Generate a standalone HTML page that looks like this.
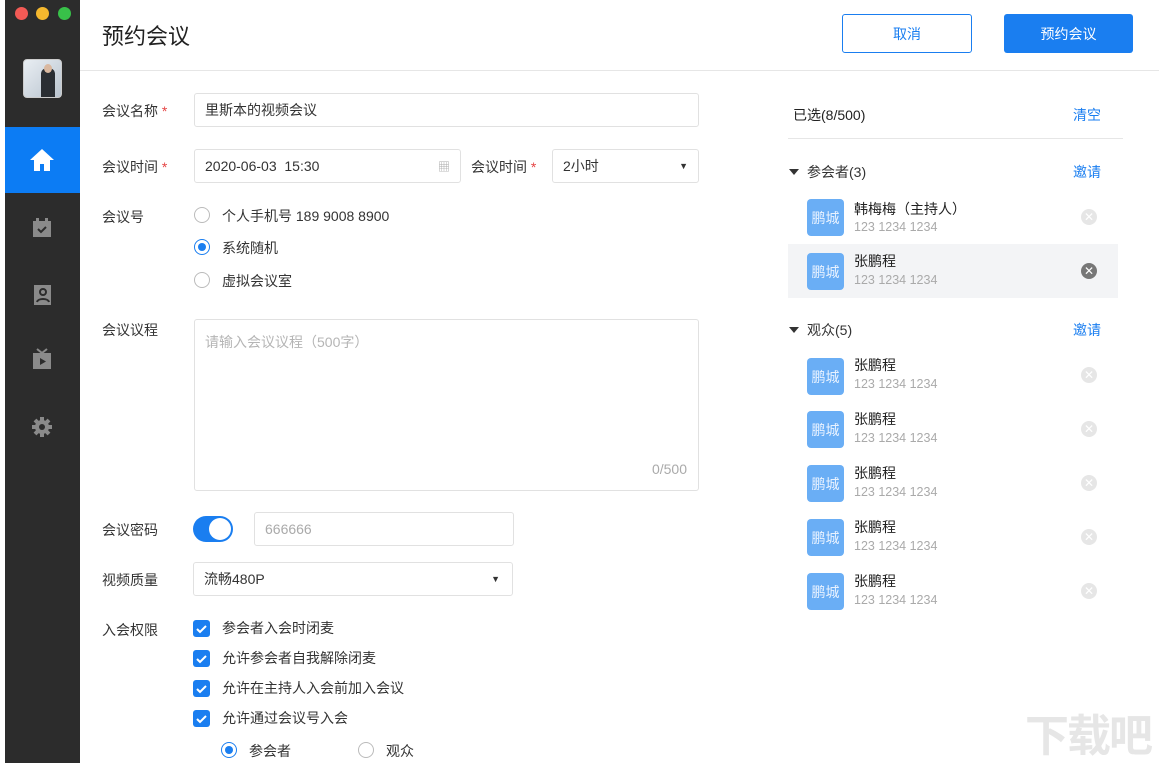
<!DOCTYPE html>
<html><head><meta charset="utf-8"><style>
*{margin:0;padding:0;box-sizing:border-box}
body{width:1159px;height:763px;overflow:hidden;background:#fff;font-family:"Liberation Sans","Noto Sans CJK SC",sans-serif;color:#333;font-size:14px;position:relative}
.a{position:absolute}
.side{left:5px;top:0;width:75px;height:763px;background:#2c2c2c}
.lbl{position:absolute;left:102px;font-size:14px;color:#333}
.req{color:#e54545}
.inp{position:absolute;border:1px solid #e1e1e1;border-radius:3px;background:#fff;font-size:14px;padding-left:10px;display:flex;align-items:center}
.radio{position:absolute;width:16px;height:16px;border:1px solid #bbb;border-radius:50%}
.radio.on{border:1px solid #1a7ef0}
.radio.on::after{content:"";position:absolute;left:3px;top:3px;width:8px;height:8px;border-radius:50%;background:#1a7ef0}
.cb{position:absolute;left:193px;width:17px;height:17px;border-radius:3px;background:#1a7ef0}
.cb svg{position:absolute;left:2px;top:2px}
.ct{position:absolute;left:222px;font-size:14px}
.av{position:absolute;left:807px;width:37px;height:37px;border-radius:4px;background:#6aaef5;color:#e8f2ff;font-size:14px;display:flex;align-items:center;justify-content:center}
.nm{position:absolute;left:854px;font-size:14px;color:#222}
.ph{position:absolute;left:854px;font-size:12.5px;color:#aaa}
.x{position:absolute;left:1081px;width:16px;height:16px;border-radius:50%;background:#e6e6e6;color:#fff;font-size:12px;line-height:16px;text-align:center}
.x.d{background:#777}
.tri{display:inline-block;width:0;height:0;border-left:5px solid transparent;border-right:5px solid transparent;border-top:6px solid #333;margin-right:8px;vertical-align:2px}
.inv{position:absolute;left:1073px;color:#1a7ef0;font-size:14px}
</style></head><body>
<div class="a side"></div>
<div class="a" style="left:15px;top:7px;width:13px;height:13px;border-radius:50%;background:#f25a55"></div>
<div class="a" style="left:36px;top:7px;width:13px;height:13px;border-radius:50%;background:#f5b82e"></div>
<div class="a" style="left:58px;top:7px;width:13px;height:13px;border-radius:50%;background:#38c149"></div>
<div class="a" style="left:23px;top:59px;width:39px;height:39px;border-radius:4px;background:linear-gradient(135deg,#e9eef3,#b9c4cf);border:1px solid #ccc;overflow:hidden"><div class="a" style="left:17px;top:8px;width:14px;height:30px;background:#2a2e33;border-radius:6px 6px 0 0"></div><div class="a" style="left:20px;top:4px;width:8px;height:9px;background:#d9b8a0;border-radius:50%"></div></div>
<div class="a" style="left:5px;top:127px;width:75px;height:66px;background:#0c7cf4"></div>
<svg class="a" style="left:29px;top:148px" width="26" height="24" viewBox="0 0 26 24"><path d="M13 1L1 12h4v11h6v-7h4v7h6V12h4z" fill="#fff"/></svg>
<svg class="a" style="left:32px;top:218px" width="20" height="20" viewBox="0 0 20 20"><rect x="1" y="3" width="18" height="16" fill="#8a8a8a"/><rect x="4" y="0" width="3" height="5" fill="#8a8a8a"/><rect x="13" y="0" width="3" height="5" fill="#8a8a8a"/><path d="M6 11l3 3 5-5" stroke="#2c2c2c" stroke-width="2" fill="none"/></svg>
<svg class="a" style="left:32px;top:284px" width="20" height="22" viewBox="0 0 20 22"><rect x="2" y="1" width="17" height="20" fill="#8a8a8a"/><circle cx="11" cy="8" r="3" fill="none" stroke="#2c2c2c" stroke-width="2"/><path d="M5 18c1-4 11-4 12 0" stroke="#2c2c2c" stroke-width="2" fill="none"/></svg>
<svg class="a" style="left:32px;top:348px" width="20" height="22" viewBox="0 0 20 22"><path d="M5 1l5 4 5-4" stroke="#8a8a8a" stroke-width="2" fill="none"/><rect x="1" y="5" width="18" height="16" fill="#8a8a8a"/><path d="M8 10v7l6-3.5z" fill="#2c2c2c"/></svg>
<svg class="a" style="left:31px;top:416px" width="22" height="22" viewBox="0 0 22 22"><circle cx="11" cy="11" r="7" fill="#8a8a8a"/><g stroke="#8a8a8a" stroke-width="4"><path d="M11 1v20M1 11h20M4 4l14 14M18 4L4 18"/></g><circle cx="11" cy="11" r="3" fill="#2c2c2c"/></svg>

<div class="a" style="left:102px;top:19px;font-size:22px;color:#222">预约会议</div>
<div class="a" style="left:842px;top:14px;width:130px;height:39px;border:1px solid #1a7ef0;border-radius:3px;color:#1a7ef0;display:flex;align-items:center;justify-content:center">取消</div>
<div class="a" style="left:1004px;top:14px;width:129px;height:39px;background:#1a7ef0;border-radius:3px;color:#fff;display:flex;align-items:center;justify-content:center">预约会议</div>
<div class="a" style="left:80px;top:70px;width:1079px;height:1px;background:#e6e6e6"></div>

<div class="lbl" style="top:101px">会议名称 <span class="req">*</span></div>
<div class="inp" style="left:194px;top:93px;width:505px;height:34px">里斯本的视频会议</div>
<div class="lbl" style="top:157px">会议时间 <span class="req">*</span></div>
<div class="inp" style="left:194px;top:149px;width:267px;height:34px">2020-06-03&nbsp;&nbsp;15:30<span style="position:absolute;right:10px;color:#aaa;font-size:12px">▦</span></div>
<div class="lbl" style="top:157px;left:471px">会议时间 <span class="req">*</span></div>
<div class="inp" style="left:552px;top:149px;width:147px;height:34px">2小时<span style="position:absolute;right:10px;font-size:9px">▼</span></div>
<div class="lbl" style="top:207px">会议号</div>
<div class="radio" style="left:194px;top:207px"></div><div class="a" style="left:222px;top:206px">个人手机号 189 9008 8900</div>
<div class="radio on" style="left:194px;top:239px"></div><div class="a" style="left:222px;top:238px">系统随机</div>
<div class="radio" style="left:194px;top:272px"></div><div class="a" style="left:222px;top:271px">虚拟会议室</div>
<div class="lbl" style="top:320px">会议议程</div>
<div class="a" style="left:194px;top:319px;width:505px;height:172px;border:1px solid #e1e1e1;border-radius:3px"><div class="a" style="left:10px;top:12px;color:#b5b5b5">请输入会议议程（500字）</div><div class="a" style="right:11px;bottom:13px;color:#aaa">0/500</div></div>
<div class="lbl" style="top:520px">会议密码</div>
<div class="a" style="left:193px;top:516px;width:40px;height:26px;border-radius:13px;background:#1a7ef0"><div class="a" style="right:2px;top:2px;width:22px;height:22px;border-radius:50%;background:#fff"></div></div>
<div class="inp" style="left:254px;top:512px;width:260px;height:34px;color:#aaa">666666</div>
<div class="lbl" style="top:570px">视频质量</div>
<div class="inp" style="left:193px;top:562px;width:320px;height:34px">流畅480P<span style="position:absolute;right:12px;font-size:9px">▼</span></div>
<div class="lbl" style="top:620px">入会权限</div>
<div class="cb" style="top:620px"><svg width="13" height="13"><path d="M2 7l3 3 6-6" stroke="#fff" stroke-width="2" fill="none"/></svg></div><div class="ct" style="top:618px">参会者入会时闭麦</div>
<div class="cb" style="top:650px"><svg width="13" height="13"><path d="M2 7l3 3 6-6" stroke="#fff" stroke-width="2" fill="none"/></svg></div><div class="ct" style="top:648px">允许参会者自我解除闭麦</div>
<div class="cb" style="top:680px"><svg width="13" height="13"><path d="M2 7l3 3 6-6" stroke="#fff" stroke-width="2" fill="none"/></svg></div><div class="ct" style="top:678px">允许在主持人入会前加入会议</div>
<div class="cb" style="top:710px"><svg width="13" height="13"><path d="M2 7l3 3 6-6" stroke="#fff" stroke-width="2" fill="none"/></svg></div><div class="ct" style="top:708px">允许通过会议号入会</div>
<div class="radio on" style="left:221px;top:742px"></div><div class="a" style="left:249px;top:741px">参会者</div>
<div class="radio" style="left:358px;top:742px"></div><div class="a" style="left:386px;top:741px">观众</div>

<div class="a" style="left:793px;top:105px;color:#222">已选(8/500)</div>
<div class="inv" style="top:105px">清空</div>
<div class="a" style="left:788px;top:138px;width:335px;height:1px;background:#e6e6e6"></div>
<div class="a" style="left:789px;top:162px"><span class="tri"></span>参会者(3)</div>
<div class="inv" style="top:162px">邀请</div>
<div class="av" style="top:199px">鹏城</div><div class="nm" style="top:199px">韩梅梅（主持人）</div><div class="ph" style="top:220px">123 1234 1234</div><div class="x" style="top:209px">✕</div>
<div class="a" style="left:788px;top:244px;width:330px;height:54px;background:#f3f4f6"></div>
<div class="av" style="top:253px">鹏城</div><div class="nm" style="top:251px">张鹏程</div><div class="ph" style="top:273px">123 1234 1234</div><div class="x d" style="top:263px">✕</div>
<div class="a" style="left:789px;top:320px"><span class="tri"></span>观众(5)</div>
<div class="inv" style="top:320px">邀请</div>
<div class="av" style="top:358px">鹏城</div><div class="nm" style="top:355px">张鹏程</div><div class="ph" style="top:377px">123 1234 1234</div><div class="x" style="top:367px">✕</div>
<div class="av" style="top:411px">鹏城</div><div class="nm" style="top:409px">张鹏程</div><div class="ph" style="top:431px">123 1234 1234</div><div class="x" style="top:421px">✕</div>
<div class="av" style="top:465px">鹏城</div><div class="nm" style="top:463px">张鹏程</div><div class="ph" style="top:485px">123 1234 1234</div><div class="x" style="top:475px">✕</div>
<div class="av" style="top:519px">鹏城</div><div class="nm" style="top:517px">张鹏程</div><div class="ph" style="top:539px">123 1234 1234</div><div class="x" style="top:529px">✕</div>
<div class="av" style="top:573px">鹏城</div><div class="nm" style="top:571px">张鹏程</div><div class="ph" style="top:593px">123 1234 1234</div><div class="x" style="top:583px">✕</div>
<div class="a" style="left:1025px;top:700px;font-size:44px;color:#e6e6e6;font-weight:bold;letter-spacing:-2px">下载吧</div>
</body></html>
